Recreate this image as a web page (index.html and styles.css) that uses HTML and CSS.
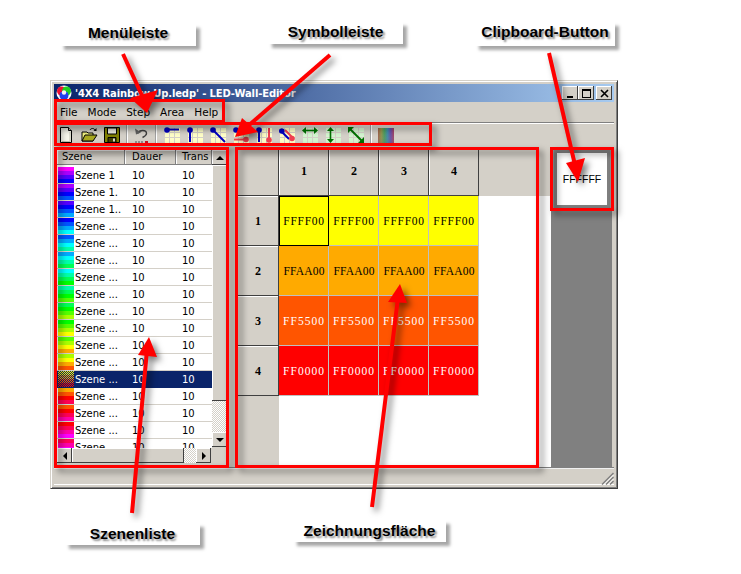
FILE: index.html
```html
<!DOCTYPE html>
<html lang="en">
<head>
    <meta charset="UTF-8">
    <meta name="viewport" content="width=device-width, initial-scale=1.0">
    <title>LED-Wall-Editor</title>
    <link rel="stylesheet" href="styles.css">
</head>
<body>
<svg class="defs" aria-hidden="true">
    <symbol id="grid-y" viewBox="0 0 16 16">
        <rect x="1" y="1" width="15" height="15" fill="#ffffc8"/>
        <path d="M5.5 1v15M10.5 1v15M1 5.5h15M1 10.5h15" stroke="#d4d0c8" fill="none"/>
    </symbol>
    <symbol id="grid-g" viewBox="0 0 16 16">
        <rect x="1" y="1" width="15" height="15" fill="#d4f5d0"/>
        <path d="M5.5 1v15M10.5 1v15M1 5.5h15M1 10.5h15" stroke="#d4d0c8" fill="none"/>
    </symbol>
    <pattern id="dither" width="2" height="2" patternUnits="userSpaceOnUse">
        <rect width="1" height="1" fill="#0a246a"/>
        <rect x="1" y="1" width="1" height="1" fill="#0a246a"/>
    </pattern>
</svg>

<div class="page">
    <div class="window">
        <div class="titlebar">
            <svg class="app-icon" width="16" height="16" viewBox="0 0 16 16">
                <circle cx="8" cy="8" r="7.5" fill="#fff"/>
                <circle cx="5.5" cy="6" r="4.5" fill="#f01030"/>
                <circle cx="10.5" cy="6" r="4.5" fill="#20d020"/>
                <circle cx="8" cy="10.5" r="4.5" fill="#2040f0"/>
                <circle cx="8" cy="7.5" r="2.2" fill="#f4f4f4"/>
            </svg>
            <span class="title-text">'4X4 Rainbow Up.ledp' - LED-Wall-Editor</span>
            <div class="caption-buttons">
                <span class="caption-btn"><svg width="9" height="9" viewBox="0 0 9 9"><path d="M1 7h6v2H1z"/></svg></span>
                <span class="caption-btn"><svg width="9" height="9" viewBox="0 0 9 9"><path d="M0 0h9v9H0zM1 2v6h7V2z" fill-rule="evenodd"/></svg></span>
                <span class="caption-btn close"><svg width="9" height="9" viewBox="0 0 9 9"><path d="M1 1l7 7M8 1L1 8" stroke="#000" stroke-width="1.6"/></svg></span>
            </div>
        </div>

        <div class="menubar">
            <span>File</span><span>Mode</span><span>Step</span><span>Area</span><span>Help</span>
        </div>

        <div class="toolbar">
            <svg class="tool doc" width="14" height="16" viewBox="0 0 14 16">
                <path d="M1.5.5h8l3 3v12h-11z" fill="#f8f8ec" stroke="#000"/>
                <path d="M9.5.5v3h3" fill="#c8c8b8" stroke="#000"/>
                <path d="M11 5v9.5H3" fill="none" stroke="#c0c0b0"/>
            </svg>
            <svg class="tool open" width="17" height="16" viewBox="0 0 17 16">
                <path d="M1 14V5h5l1 1h5v8z" fill="#f0f080" stroke="#000"/>
                <path d="M1 14l3-6h12l-4 6z" fill="#a8a820" stroke="#000"/>
                <path d="M9 3c1-2 4-2 5 0" fill="none" stroke="#000"/>
                <path d="M15.500 1v3h-3z"/>
            </svg>
            <svg class="tool save" width="16" height="16" viewBox="0 0 16 16">
                <path d="M.5.5h15v15H.5z" fill="#808000" stroke="#000"/>
                <path d="M3.500 1h9v6h-9z" fill="#ecece0" stroke="#000"/>
                <path d="M4 10.500h8v5H4z" fill="#404000" stroke="#000"/>
                <path d="M9 11.500h2v3H9z" fill="#d8d8c8"/>
            </svg>
            <i class="tool-sep"></i>
            <svg class="tool undo" width="15" height="17" viewBox="0 0 15 17">
                <path d="M3.500 6.500c2-4 9-4 9 0 0 2-2 3-4 4" fill="none" stroke="#404040" stroke-width="1.400"/>
                <path d="M1 1.500l1 6 5-2z" fill="#606060"/>
                <path d="M1 14h2v2H1zM4 14h2v2H4zM7 14h2v2H7z" fill="#909090"/>
                <path d="M11 14h3v2.500h-3z" fill="#d01020"/>
            </svg>
            <i class="tool-sep"></i>
            <div class="tool-group">
                <svg class="tool" width="16" height="16" viewBox="0 0 16 16">
                    <use href="#grid-y"/>
                    <path d="M3 2.500h12" stroke="#0000c0" stroke-width="2"/><circle cx="3" cy="3" r="2.800" fill="#0000c0"/>
                </svg>
                <svg class="tool" width="16" height="16" viewBox="0 0 16 16">
                    <use href="#grid-y"/>
                    <path d="M3 3v12" stroke="#0000c0" stroke-width="2"/><circle cx="3" cy="3" r="2.800" fill="#0000c0"/>
                </svg>
                <svg class="tool" width="16" height="16" viewBox="0 0 16 16">
                    <use href="#grid-y"/>
                    <path d="M3 3l12 12" stroke="#0000c0" stroke-width="2"/><circle cx="3" cy="3" r="2.800" fill="#0000c0"/>
                </svg>
                <svg class="tool" width="16" height="16" viewBox="0 0 16 16">
                    <use href="#grid-y"/>
                    <path d="M3 3h12" stroke="#0000c0" stroke-width="2"/><circle cx="3" cy="3" r="2.800" fill="#0000c0"/>
                    <path d="M1 12.500h12" stroke="#f04050" stroke-width="2"/><circle cx="13" cy="12.500" r="2.800" fill="#f04050"/>
                </svg>
                <svg class="tool" width="16" height="16" viewBox="0 0 16 16">
                    <use href="#grid-y"/>
                    <path d="M3 3v12" stroke="#0000c0" stroke-width="2"/><circle cx="3" cy="3" r="2.800" fill="#0000c0"/>
                    <path d="M13 1v12" stroke="#f04050" stroke-width="2"/><circle cx="13" cy="13" r="2.800" fill="#f04050"/>
                </svg>
                <svg class="tool" width="16" height="16" viewBox="0 0 16 16">
                    <use href="#grid-y"/>
                    <path d="M2 4l8 8" stroke="#0000c0" stroke-width="2"/><circle cx="2.800" cy="4" r="2.800" fill="#0000c0"/>
                    <path d="M6 3l8 8" stroke="#f04050" stroke-width="2"/><circle cx="13" cy="11.500" r="2.800" fill="#f04050"/>
                </svg>
                <svg class="tool" width="16" height="16" viewBox="0 0 16 16">
                    <use href="#grid-g"/>
                    <path d="M2 3.500h12" stroke="#007000" stroke-width="1.600"/><path d="M0 3.500L4 0v7zM16 3.500L12 0v7z" fill="#007000"/>
                </svg>
                <svg class="tool" width="16" height="16" viewBox="0 0 16 16">
                    <use href="#grid-g"/>
                    <path d="M5.500 2v12" stroke="#007000" stroke-width="1.600"/><path d="M5.500 0L9 4H2zM5.500 16L9 12H2z" fill="#007000"/>
                </svg>
                <svg class="tool" width="16" height="16" viewBox="0 0 16 16">
                    <use href="#grid-g"/>
                    <path d="M2 2l12 12" stroke="#007000" stroke-width="2"/><path d="M0 0h6L0 6zM16 16h-6l6-6z" fill="#007000"/>
                </svg>
            </div>
            <i class="tool-sep last"></i>
            <div class="rainbow"></div>
        </div>

        <div class="main">
            <div class="scene-list">
                <div class="list-body">
                    <div class="list-head"><span>Szene</span><span>Dauer</span><span>Trans</span></div>
                    <div class="list-rows">
                        <div class="row"><span class="name"><i class="thumb" style="--step:0"></i>Szene 1</span><span>10</span><span>10</span></div>
                        <div class="row"><span class="name"><i class="thumb" style="--step:1"></i>Szene 1.</span><span>10</span><span>10</span></div>
                        <div class="row"><span class="name"><i class="thumb" style="--step:2"></i>Szene 1..</span><span>10</span><span>10</span></div>
                        <div class="row"><span class="name"><i class="thumb" style="--step:3"></i>Szene ...</span><span>10</span><span>10</span></div>
                        <div class="row"><span class="name"><i class="thumb" style="--step:4"></i>Szene ...</span><span>10</span><span>10</span></div>
                        <div class="row"><span class="name"><i class="thumb" style="--step:5"></i>Szene ...</span><span>10</span><span>10</span></div>
                        <div class="row"><span class="name"><i class="thumb" style="--step:6"></i>Szene ...</span><span>10</span><span>10</span></div>
                        <div class="row"><span class="name"><i class="thumb" style="--step:7"></i>Szene ...</span><span>10</span><span>10</span></div>
                        <div class="row"><span class="name"><i class="thumb" style="--step:8"></i>Szene ...</span><span>10</span><span>10</span></div>
                        <div class="row"><span class="name"><i class="thumb" style="--step:9"></i>Szene ...</span><span>10</span><span>10</span></div>
                        <div class="row"><span class="name"><i class="thumb" style="--step:10"></i>Szene ...</span><span>10</span><span>10</span></div>
                        <div class="row"><span class="name"><i class="thumb" style="--step:11"></i>Szene ...</span><span>10</span><span>10</span></div>
                        <div class="row selected"><span class="name"><i class="thumb" style="--step:12"><svg class="dither" width="16" height="16"><rect width="16" height="16" fill="url(#dither)"/></svg></i>Szene ...</span><span>10</span><span>10</span></div>
                        <div class="row"><span class="name"><i class="thumb" style="--step:13"></i>Szene ...</span><span>10</span><span>10</span></div>
                        <div class="row"><span class="name"><i class="thumb" style="--step:14"></i>Szene ...</span><span>10</span><span>10</span></div>
                        <div class="row"><span class="name"><i class="thumb" style="--step:15"></i>Szene ...</span><span>10</span><span>10</span></div>
                        <div class="row"><span class="name"><i class="thumb" style="--step:16"></i>Szene ...</span><span>10</span><span>10</span></div>
                    </div>
                </div>
                <div class="vscroll">
                    <span class="sb-btn"><i class="arrow up"></i></span>
                    <span class="sb-thumb-v"></span>
                    <span class="sb-track"></span>
                    <span class="sb-btn"><i class="arrow down"></i></span>
                </div>
                <div class="hscroll">
                    <span class="sb-btn"><i class="arrow left"></i></span>
                    <span class="sb-thumb-h"></span>
                    <span class="sb-track"></span>
                    <span class="sb-btn"><i class="arrow right"></i></span>
                </div>
            </div>

            <div class="canvas">
                <div class="head"></div>
                <div class="head col">1</div><div class="head col">2</div><div class="head col">3</div><div class="head col">4</div>
                <div class="head-fill"></div>

                <div class="head row-head">1</div>
                <div class="cell yellow current">FFFF00</div><div class="cell yellow">FFFF00</div><div class="cell yellow">FFFF00</div><div class="cell yellow">FFFF00</div>
                <div class="blank"></div>

                <div class="head row-head">2</div>
                <div class="cell amber">FFAA00</div><div class="cell amber">FFAA00</div><div class="cell amber">FFAA00</div><div class="cell amber">FFAA00</div>
                <div class="blank"></div>

                <div class="head row-head">3</div>
                <div class="cell orange">FF5500</div><div class="cell orange">FF5500</div><div class="cell orange">FF5500</div><div class="cell orange">FF5500</div>
                <div class="blank"></div>

                <div class="head row-head">4</div>
                <div class="cell red">FF0000</div><div class="cell red">FF0000</div><div class="cell red">FF0000</div><div class="cell red">FF0000</div>
                <div class="blank"></div>

                <div class="row-fill"></div>
            </div>

            <div class="clip-panel">
                <div class="clip-button">FFFFFF</div>
            </div>
        </div>

        <div class="statusbar">
            <svg width="13" height="13" viewBox="0 0 13 13">
                <path d="M12.500 1L1 12.500M12.500 5L5 12.500M12.500 9L9 12.500" stroke="#808080" stroke-width="1.500"/>
                <path d="M12.500 3L3 12.500M12.500 7L7 12.500" stroke="#fff"/>
            </svg>
        </div>
    </div>

    <!-- annotations drawn over the screenshot -->
    <svg class="marks" width="741" height="574" viewBox="0 0 741 574">
        <g fill="none" stroke="#f00" stroke-width="3">
            <rect x="55.500" y="100.500" width="168" height="21"/>
            <rect x="55.500" y="123.500" width="375" height="21"/>
            <rect x="55.500" y="148.500" width="172" height="318"/>
            <rect x="236.500" y="148.500" width="301" height="318"/>
            <rect x="551.500" y="148.500" width="61" height="61"/>
        </g>
        <g stroke="#f00" stroke-width="4" fill="#f00">
            <path d="M123 54L144 100"/>
            <path d="M330 55L248 126"/>
            <path d="M549 53L575 165"/>
            <path d="M132 513L147 350"/>
            <path d="M372 507L398 298"/>
        </g>
        <g fill="#f00">
            <path d="M130 98L158 90L147 113z"/>
            <path d="M242 118L258 132L235 137z"/>
            <path d="M566 163L585 158L578 182z"/>
            <path d="M138 355L157 357L149 337z"/>
            <path d="M388 302L407 303L400 284z"/>
        </g>
    </svg>

    <div class="label l-menu">Menüleiste</div>
    <div class="label l-symbol">Symbolleiste</div>
    <div class="label l-clip">Clipboard-Button</div>
    <div class="label l-scenes">Szenenliste</div>
    <div class="label l-draw">Zeichnungsfläche</div>
</div>
</body>
</html>
```

FILE: styles.css
```css
* {
    box-sizing: border-box;
}
body {
    margin: 0;
    background: #fff;
    font-family: "DejaVu Sans", sans-serif;
    font-size: 10px;
    color: #000;
}
.defs {
    position: absolute;
    width: 0;
    height: 0;
}
.page {
    position: relative;
    width: 741px;
    height: 574px;
    overflow: hidden;
    padding: 80px 0 0 50px;
}

/* window */
.window {
    width: 568px;
    height: 409px;
    padding: 3px;
    background: #d4d0c8;
    border: 1px solid #d4d0c8;
    border-right-color: #404040;
    border-bottom-color: #404040;
    box-shadow: inset 1px 1px 0 #fff, inset -1px -1px 0 #808080;
    display: flex;
    flex-direction: column;
}
.titlebar {
    height: 18px;
    flex: none;
    display: flex;
    align-items: center;
    padding: 0 2px;
    color: #fff;
    font-weight: bold;
    font-size: 10px;
    letter-spacing: -0.130px;
    background: linear-gradient(90deg, #0a246a, #a6caf0);
}
.app-icon {
    flex: none;
    margin-right: 3px;
}
.title-text {
    white-space: nowrap;
}
.caption-buttons {
    margin-left: auto;
    display: flex;
}
.caption-btn {
    width: 16px;
    height: 14px;
    background: #d4d0c8;
    box-shadow: inset -1px -1px 0 #404040, inset 1px 1px 0 #fff;
    display: flex;
    align-items: center;
    justify-content: center;
}
.caption-btn.close {
    margin-left: 2px;
}
.menubar {
    height: 20px;
    flex: none;
    display: flex;
    align-items: center;
    padding-left: 6px;
    gap: 10px;
    font-size: 10.500px;
}
.toolbar {
    height: 25px;
    flex: none;
    display: flex;
    align-items: center;
    padding-left: 5px;
    border-top: 1px solid #808080;
    box-shadow: inset 0 1px 0 #fff;
}
.tool {
    flex: none;
}
.tool.doc {
    margin-right: 8px;
}
.tool.open {
    margin-right: 6px;
}
.tool-sep {
    flex: none;
    width: 2px;
    height: 20px;
    margin: 0 6px;
    background: #a0a0a0;
    border-right: 1px solid #fff;
}
.tool-group {
    display: flex;
    gap: 7px;
    padding-left: 1px;
}
.tool-sep.last {
    margin: 0 6px 0 6px;
}
.rainbow {
    width: 16px;
    height: 15px;
    background: linear-gradient(rgba(128, 128, 128, 0.3), rgba(128, 128, 128, 0.5)),
        linear-gradient(90deg, #b05030, #a0a030, #30b050, #2090c0, #6030c0, #c02050);
}

/* main area */
.main {
    height: 320px;
    flex: none;
    display: flex;
    padding: 0 3px;
}
.scene-list {
    flex: none;
    width: 170px;
    height: 313px;
    margin: 3px 10px 0 0;
    display: grid;
    grid-template-columns: 155px 15px;
    grid-template-rows: 298px 15px;
}
.list-body {
    overflow: hidden;
    background: #fff;
}
.list-head,
.row {
    display: grid;
    grid-template-columns: 68px 51px 36px;
}
.list-head {
    height: 15px;
    background: #d4d0c8;
    line-height: 14px;
}
.list-head span {
    padding-left: 5px;
    box-shadow: inset -1px -1px 0 #808080, inset 1px 1px 0 #fff;
}
.list-head span + span {
    padding-left: 7px;
}
.list-head span:last-child {
    padding-left: 6px;
}
.list-rows {
    padding-top: 2px;
}
.row {
    height: 17px;
    line-height: 18px;
    border-bottom: 1px solid #d4d0c8;
}
.row span + span {
    padding-left: 7px;
}
.row span:last-child {
    padding-left: 6px;
}
.name {
    display: flex;
    padding-left: 1px;
}
.thumb {
    position: relative;
    flex: none;
    width: 16px;
    height: 16px;
    margin-right: 1px;
    background-image: linear-gradient(
        #f0f 0 4px, #a0f 0 8px, #50f 0 12px, #00f 0 16px, #05f 0 20px,
        #0af 0 24px, #0ff 0 28px, #0fa 0 32px, #0f5 0 36px, #0f0 0 40px,
        #5f0 0 44px, #af0 0 48px, #ff0 0 52px, #fa0 0 56px, #f50 0 60px,
        #f00 0 64px, #f05 0 68px, #f0a 0 72px, #f0f 0 76px, #a0f 0 80px);
    background-size: 16px 80px;
    background-repeat: no-repeat;
    background-position: 0 calc(var(--step) * -4px);
}
.dither {
    display: block;
}
.row.selected {
    background: #0a246a;
    color: #fff;
    border-bottom-color: #0a246a;
}

/* scrollbars */
.vscroll {
    display: flex;
    flex-direction: column;
}
.hscroll {
    display: flex;
}
.sb-btn {
    flex: none;
    width: 15px;
    height: 15px;
    background: #d4d0c8;
    box-shadow: inset -1px -1px 0 #404040, inset 1px 1px 0 #fff;
    display: flex;
    align-items: center;
    justify-content: center;
}
.sb-thumb-v {
    flex: none;
    height: 236px;
    background: #d4d0c8;
    box-shadow: inset -1px -1px 0 #404040, inset 1px 1px 0 #fff;
}
.sb-thumb-h {
    flex: none;
    width: 112px;
    background: #d4d0c8;
    box-shadow: inset -1px -1px 0 #404040, inset 1px 1px 0 #fff;
}
.sb-track {
    flex: 1;
    background: conic-gradient(#fff 25%, #d4d0c8 0 50%, #fff 0 75%, #d4d0c8 0) 0 0 / 2px 2px;
}
.vscroll .sb-track {
    flex: none;
    height: 31px;
}
.hscroll .sb-track {
    flex: none;
    width: 12px;
}
.arrow {
    width: 0;
    height: 0;
    border: 4px solid transparent;
}
.arrow.up {
    border-top-width: 0;
    border-bottom-color: #000;
}
.arrow.down {
    border-bottom-width: 0;
    border-top-color: #000;
}
.arrow.left {
    border-left-width: 0;
    border-right-color: #000;
}
.arrow.right {
    border-right-width: 0;
    border-left-color: #000;
}

/* drawing grid */
.canvas {
    flex: none;
    width: 314px;
    background: #fff;
    display: grid;
    grid-template-columns: 42px repeat(4, 50px) 1fr;
    grid-template-rows: 49px repeat(4, 50px) 1fr;
    font-family: "Liberation Serif", serif;
    font-size: 11.500px;
}
.head {
    background: #d4d0c8;
    display: flex;
    align-items: center;
    justify-content: center;
    font-family: "Liberation Serif", serif;
    font-weight: bold;
    font-size: 12px;
    box-shadow: inset -1px -1px 0 #404040, inset 1px 1px 0 #fff;
}
.head-fill {
    background: #d4d0c8;
}
.row-fill {
    background: #d4d0c8;
    grid-column: 1;
}
.cell {
    display: flex;
    align-items: center;
    justify-content: center;
    box-shadow: inset -1px -1px 0 #c0c0c0;
}
/* the original font is fixed width, so even the strings out */
.cell.yellow {
    background: #ff0;
    letter-spacing: 0.700px;
}
.cell.amber {
    background: #fa0;
    letter-spacing: 0.200px;
}
.cell.orange {
    background: #f50;
    color: #fff;
    letter-spacing: 1px;
}
.cell.red {
    background: #f00;
    color: #fff;
    letter-spacing: 1px;
}
.cell.current {
    box-shadow: inset 0 0 0 1px #000;
}
.clip-panel {
    flex: none;
    width: 61px;
    padding: 3px 2px 0 3px;
    background: #808080;
}
.clip-button {
    height: 58px;
    background: #fff;
    border: 3px solid #808080;
    box-shadow: 0 0 0 1px #909090;
    display: flex;
    align-items: center;
    justify-content: center;
    font-family: "Liberation Sans", sans-serif;
    font-size: 10.500px;
}
.statusbar {
    flex: 1;
    display: flex;
    justify-content: flex-end;
    align-items: flex-end;
    border-top: 1px solid #808080;
    box-shadow: inset 0 1px 0 #f0f0f0, inset 0 -1px 0 #fff;
}

/* annotations */
.marks {
    position: absolute;
    left: 0;
    top: 0;
    filter: drop-shadow(4px 4px 3px rgba(0, 0, 0, 0.5));
}
.label {
    position: absolute;
    background: #fff;
    font-family: "Liberation Sans", sans-serif;
    font-weight: bold;
    font-size: 15.500px;
    text-align: center;
    box-shadow: 4px 4px 3px rgba(0, 0, 0, 0.35);
    text-shadow: 2px 2px 2px rgba(0, 0, 0, 0.45);
}
.l-menu {
    left: 60px;
    top: 24px;
    width: 136px;
    height: 22px;
    line-height: 18px;
}
.l-symbol {
    left: 268px;
    top: 22px;
    width: 135px;
    height: 22px;
    line-height: 19px;
}
.l-clip {
    left: 475px;
    top: 22px;
    width: 140px;
    height: 24px;
    line-height: 20px;
}
.l-scenes {
    left: 65px;
    top: 523px;
    width: 135px;
    height: 22px;
    line-height: 21px;
}
.l-draw {
    left: 293px;
    top: 520px;
    width: 153px;
    height: 22px;
    line-height: 21px;
}
```
